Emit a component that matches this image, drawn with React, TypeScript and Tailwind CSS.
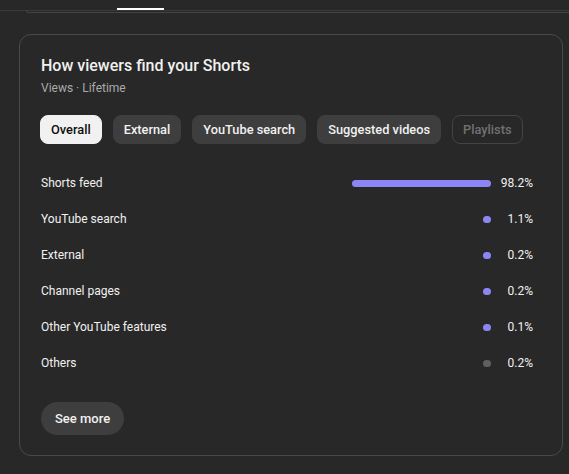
const chips = [
  { label: 'Overall', state: 'active' },
  { label: 'External', state: 'default' },
  { label: 'YouTube search', state: 'default' },
  { label: 'Suggested videos', state: 'default' },
  { label: 'Playlists', state: 'disabled' },
];

const sources = [
  { label: 'Shorts feed', pct: 98.2, muted: false },
  { label: 'YouTube search', pct: 1.1, muted: false },
  { label: 'External', pct: 0.2, muted: false },
  { label: 'Channel pages', pct: 0.2, muted: false },
  { label: 'Other YouTube features', pct: 0.1, muted: false },
  { label: 'Others', pct: 0.2, muted: true },
];

function Chip({ label, state }: { label: string; state: string }) {
  const cls =
    state === 'active'
      ? 'bg-[#f1f1f1] text-[#0f0f0f] border-[#f1f1f1]'
      : state === 'disabled'
        ? 'bg-transparent text-[#717171] border-[#444444]'
        : 'bg-[#3e3e3e] text-[#f1f1f1] border-[#3e3e3e]';
  return (
    <button
      disabled={state === 'disabled'}
      className={`h-[29px] px-[10px] rounded-lg border text-[12.8px] font-medium flex items-center ${cls}`}
    >
      {label}
    </button>
  );
}

function SourceRow({ label, pct, muted }: { label: string; pct: number; muted: boolean }) {
  const barWidth = Math.max(8, (pct / 100) * 142);
  return (
    <div className="h-9 flex items-center">
      <span className="flex-1 text-[12px] text-[#f1f1f1] truncate">{label}</span>
      <div className="w-[142px] flex justify-end">
        <div
          className={`h-[7px] rounded-full ${muted ? 'bg-[#606060]' : 'bg-[#8b86f4]'}`}
          style={{ width: barWidth }}
        />
      </div>
      <span className="w-[42px] text-right text-[12px] text-[#f1f1f1] tabular-nums">{pct.toFixed(1)}%</span>
    </div>
  );
}

export default function App() {
  return (
    <div
      className="w-[569px] h-[474px] overflow-hidden bg-[#282828]"
      style={{ fontFamily: 'Roboto, "Noto Sans", sans-serif' }}
    >
      {/* tab strip scrolled off the top */}
      <div className="h-[11px] border-b border-[#3a3a3a] flex items-end">
        <div className="ml-[117px] w-[47px] h-[2px] bg-white" />
      </div>
      <div className="ml-[26px] h-[3px] -mt-[1px] border-b border-l border-[#444444] rounded-bl-[6px]" />

      {/* card */}
      <div className="mt-[21px] ml-[19px] w-[544px] border border-[#4a4a4a] rounded-xl pt-[19px] pb-[20px] px-[21px]">
        <h2 className="text-[16px] leading-6 font-medium text-[#f1f1f1]">How viewers find your Shorts</h2>
        <p className="mt-[2px] text-[12px] leading-4 text-[#aaaaaa]">Views · Lifetime</p>

        <div className="mt-[19px] -ml-[1px] flex gap-[11px]">
          {chips.map((c) => (
            <Chip key={c.label} {...c} />
          ))}
        </div>

        <div className="mt-[21px] pr-[8px]">
          {sources.map((s) => (
            <SourceRow key={s.label} {...s} />
          ))}
        </div>

        <button className="mt-[21px] h-[33px] px-[14px] rounded-full bg-[#3e3e3e] text-[13px] font-medium text-[#f1f1f1]">
          See more
        </button>
      </div>
    </div>
  );
}
